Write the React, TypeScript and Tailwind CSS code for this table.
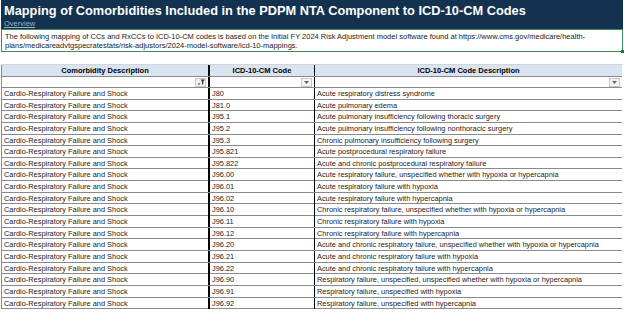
import React from 'react';

const ROWS: [string, string][] = [
  ['J80', 'Acute respiratory distress syndrome'],
  ['J81.0', 'Acute pulmonary edema'],
  ['J95.1', 'Acute pulmonary insufficiency following thoracic surgery'],
  ['J95.2', 'Acute pulmonary insufficiency following nonthoracic surgery'],
  ['J95.3', 'Chronic pulmonary insufficiency following surgery'],
  ['J95.821', 'Acute postprocedural respiratory failure'],
  ['J95.822', 'Acute and chronic postprocedural respiratory failure'],
  ['J96.00', 'Acute respiratory failure, unspecified whether with hypoxia or hypercapnia'],
  ['J96.01', 'Acute respiratory failure with hypoxia'],
  ['J96.02', 'Acute respiratory failure with hypercapnia'],
  ['J96.10', 'Chronic respiratory failure, unspecified whether with hypoxia or hypercapnia'],
  ['J96.11', 'Chronic respiratory failure with hypoxia'],
  ['J96.12', 'Chronic respiratory failure with hypercapnia'],
  ['J96.20', 'Acute and chronic respiratory failure, unspecified whether with hypoxia or hypercapnia'],
  ['J96.21', 'Acute and chronic respiratory failure with hypoxia'],
  ['J96.22', 'Acute and chronic respiratory failure with hypercapnia'],
  ['J96.90', 'Respiratory failure, unspecified, unspecified whether with hypoxia or hypercapnia'],
  ['J96.91', 'Respiratory failure, unspecified with hypoxia'],
  ['J96.92', 'Respiratory failure, unspecified with hypercapnia'],
];

const COLS = 'grid grid-cols-[208px_105px_307px]';

/** 필터 드롭다운 버튼 */
function DropButton({ filtered = false }: { filtered?: boolean }) {
  return (
    <div className="w-[11px] h-[9px] border border-[#c8c8c8] bg-[#f4f4f4] flex items-center justify-center">
      {filtered ? (
        <svg width={8} height={6} viewBox="0 0 8 6" aria-hidden="true">
          <path d="M0.5 4.5 L2 6 L3.5 4.5 Z" fill="#333" />
          <path d="M3.5 0.5 H7.8 L6.3 2.5 V5.5 H5 V2.5 Z" fill="#333" />
        </svg>
      ) : (
        <svg width={5} height={3} viewBox="0 0 5 3" aria-hidden="true">
          <path d="M0 0 H5 L2.5 3 Z" fill="#666" />
        </svg>
      )}
    </div>
  );
}

export default function App() {
  return (
    <div
      className="w-[624px] h-[312px] overflow-hidden bg-white text-black"
      style={{ fontFamily: '"Liberation Sans", Arial, sans-serif' }}
    >
      {/* 제목 */}
      <div className="ml-px w-[622px] h-[29px] bg-[#133250] pl-[3px] pt-[2px]">
        <div className="text-[12.8px] font-bold text-white leading-[17px]">
          Mapping of Comorbidities Included in the PDPM NTA Component to ICD-10-CM Codes
        </div>
        <div className="text-[7.5px] leading-[9px] text-[#9fb0c2] underline">Overview</div>
      </div>

      {/* 설명 */}
      <div className="relative ml-px w-[622px] h-[23px] border border-[#3f8a5a] px-[3px] pt-[2px] text-[7.5px] leading-[9px] text-[#222]">
        The following mapping of CCs and RxCCs to ICD-10-CM codes is based on the Initial FY 2024 Risk Adjustment model software found at https://www.cms.gov/medicare/health-
        <br />
        plans/medicareadvtgspecratestats/risk-adjustors/2024-model-software/icd-10-mappings.
        <div className="absolute -right-[2px] -bottom-[2px] w-[3px] h-[3px] bg-[#217346]" />
      </div>

      {/* 빈 행 */}
      <div className="ml-px w-[622px] h-[13px] border-b border-[#d4d4d4]" />

      {/* 표 */}
      <div className="ml-px w-[621px] border-l border-[#8a8a8a]">
        <div className={`${COLS} h-[12px] bg-[#dae3f0] border-b border-[#8a8a8a] text-[7.5px] font-bold`}>
          <div className="flex items-center justify-center border-r-2 border-black">Comorbidity Description</div>
          <div className="flex items-center justify-center border-r border-black">ICD-10-CM Code</div>
          <div className="flex items-center justify-center">ICD-10-CM Code Description</div>
        </div>
        <div className={`${COLS} h-[11px] border-b border-[#8a8a8a]`}>
          <div className="flex items-center justify-end pr-[2px] border-r-2 border-black">
            <DropButton filtered />
          </div>
          <div className="flex items-center justify-end pr-[2px] border-r border-black">
            <DropButton />
          </div>
          <div className="flex items-center justify-end pr-[2px]">
            <DropButton />
          </div>
        </div>
        {ROWS.map(([code, desc]) => (
          <div key={code} className={`${COLS} h-[11.65px] border-b border-[#8a8a8a] text-[7.4px] text-[#222]`}>
            <div className="flex items-center pl-[2px] border-r-2 border-black whitespace-nowrap">
              Cardio-Respiratory Failure and Shock
            </div>
            <div className="flex items-center pl-[2px] border-r border-black">{code}</div>
            <div className="flex items-center pl-[2px] whitespace-nowrap">{desc}</div>
          </div>
        ))}
      </div>
    </div>
  );
}
